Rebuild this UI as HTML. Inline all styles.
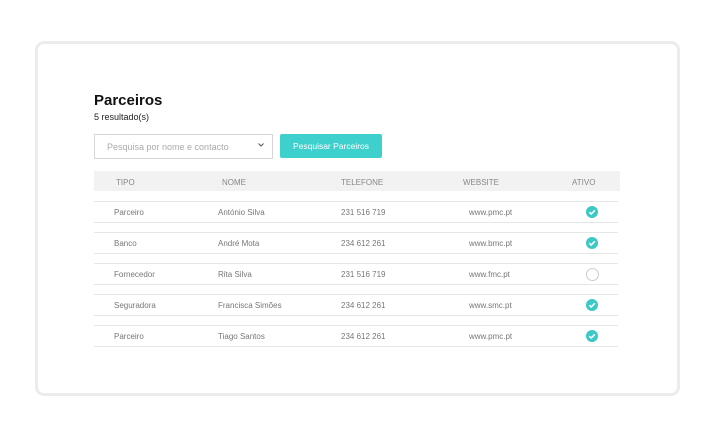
<!DOCTYPE html><html><head><style>
body{margin:0;width:713px;height:437px;background:#fff;font-family:"Liberation Sans",sans-serif;position:relative;overflow:hidden}
.card{position:absolute;left:35px;top:41px;width:639px;height:349px;border:3px solid #ececec;border-radius:9px}
.a{position:absolute;white-space:nowrap}
h1{position:absolute;left:94px;top:92px;margin:0;font-size:15px;font-weight:bold;color:#111}
.sub{left:94px;top:112px;font-size:9px;color:#222}
.inp{position:absolute;left:94px;top:134px;width:177px;height:23px;border:1px solid #d6d6d6;}
.btn{position:absolute;left:280px;top:134px;width:102px;height:24px;background:#3dd0cc;border-radius:2px;color:#fff;font-size:8.5px;text-align:center;line-height:24px}
.hd{position:absolute;left:94px;top:171px;width:526px;height:20px;background:#f2f2f2}
.h{font-size:8px;color:#888;top:178px}
.ln{position:absolute;left:94px;width:524px;height:1px;background:#e6e6e6}
.c{font-size:8px;color:#777}
.ck{position:absolute;width:12px;height:12px;border-radius:50%;background:#3cc9c6}
.ck svg{position:absolute;left:0;top:0}
.em{position:absolute;width:11px;height:11px;border-radius:50%;border:1px solid #ccc}
</style></head><body>
<div class="card"></div>
<h1>Parceiros</h1>
<div class="a sub">5 resultado(s)</div>
<div class="inp"><span class="a" style="left:12px;top:7px;font-size:9px;color:#aaa">Pesquisa por nome e contacto</span><svg class="a" style="left:163px;top:8px" width="6" height="4"><path d="M0.5 0.5 3 3 5.5 0.5" stroke="#555" stroke-width="1" fill="none"/></svg></div>
<div class="btn">Pesquisar Parceiros</div>
<div class="hd"></div>
<div class="a h" style="left:116px">TIPO</div>
<div class="a h" style="left:222px">NOME</div>
<div class="a h" style="left:341px">TELEFONE</div>
<div class="a h" style="left:463px">WEBSITE</div>
<div class="a h" style="left:572px">ATIVO</div>

<div class="ln" style="top:201px"></div><div class="ln" style="top:222px"></div>
<div class="ln" style="top:232px"></div><div class="ln" style="top:253px"></div>
<div class="ln" style="top:263px"></div><div class="ln" style="top:284px"></div>
<div class="ln" style="top:294px"></div><div class="ln" style="top:315px"></div>
<div class="ln" style="top:325px"></div><div class="ln" style="top:346px"></div>

<div class="a c" style="left:114px;top:208px">Parceiro</div><div class="a c" style="left:218px;top:208px">António Silva</div><div class="a c" style="left:341px;top:208px">231 516 719</div><div class="a c" style="left:469px;top:208px">www.pmc.pt</div>
<div class="a c" style="left:114px;top:239px">Banco</div><div class="a c" style="left:218px;top:239px">André Mota</div><div class="a c" style="left:341px;top:239px">234 612 261</div><div class="a c" style="left:469px;top:239px">www.bmc.pt</div>
<div class="a c" style="left:114px;top:270px">Fornecedor</div><div class="a c" style="left:218px;top:270px">Rita Silva</div><div class="a c" style="left:341px;top:270px">231 516 719</div><div class="a c" style="left:469px;top:270px">www.fmc.pt</div>
<div class="a c" style="left:114px;top:301px">Seguradora</div><div class="a c" style="left:218px;top:301px">Francisca Simões</div><div class="a c" style="left:341px;top:301px">234 612 261</div><div class="a c" style="left:469px;top:301px">www.smc.pt</div>
<div class="a c" style="left:114px;top:332px">Parceiro</div><div class="a c" style="left:218px;top:332px">Tiago Santos</div><div class="a c" style="left:341px;top:332px">234 612 261</div><div class="a c" style="left:469px;top:332px">www.pmc.pt</div>

<div class="ck" style="left:586px;top:206px"><svg width="12" height="12"><path d="M3.3 6.2 5.2 8 8.8 4.3" stroke="#fff" stroke-width="1.6" fill="none"/></svg></div>
<div class="ck" style="left:586px;top:237px"><svg width="12" height="12"><path d="M3.3 6.2 5.2 8 8.8 4.3" stroke="#fff" stroke-width="1.6" fill="none"/></svg></div>
<div class="em" style="left:586px;top:268px"></div>
<div class="ck" style="left:586px;top:299px"><svg width="12" height="12"><path d="M3.3 6.2 5.2 8 8.8 4.3" stroke="#fff" stroke-width="1.6" fill="none"/></svg></div>
<div class="ck" style="left:586px;top:330px"><svg width="12" height="12"><path d="M3.3 6.2 5.2 8 8.8 4.3" stroke="#fff" stroke-width="1.6" fill="none"/></svg></div>
</body></html>
